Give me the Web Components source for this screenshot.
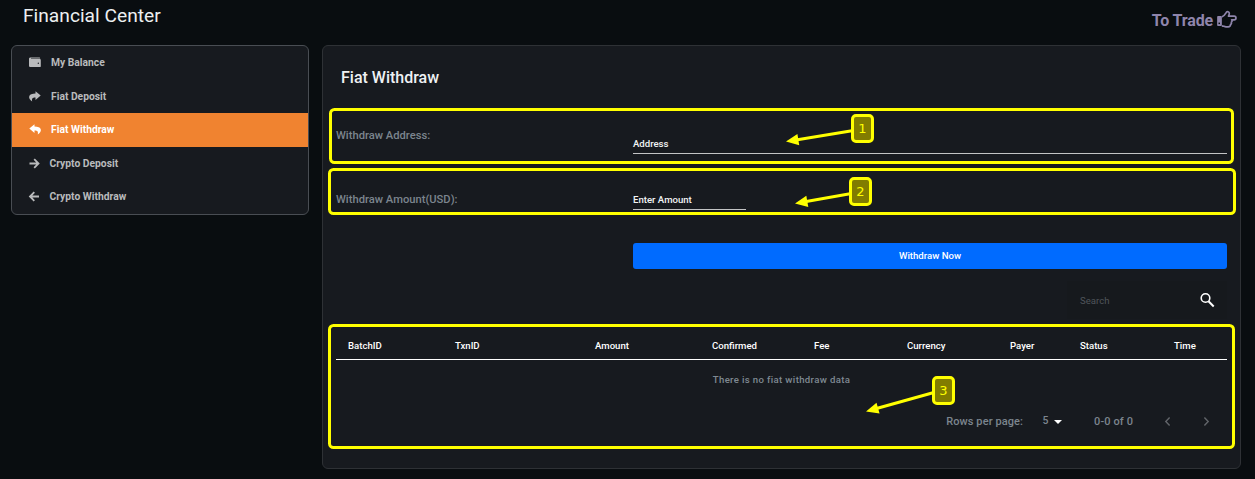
<!DOCTYPE html>
<html lang="en">
<head>
<meta charset="utf-8">
<title>Financial Center</title>
<style>
html,body{margin:0;height:100%;overflow:hidden;background:#090d10}
body{font-family:Roboto,"Liberation Sans",sans-serif}
</style>
</head>
<body>
<finance-page></finance-page>
<script>
const define = (name, html, setup) => customElements.define(name, class extends HTMLElement {
  constructor() {
    super();
    const t = document.createElement('template');
    t.innerHTML = html;
    this.attachShadow({mode: 'open'}).append(t.content.cloneNode(true));
  }
  connectedCallback() { if (setup) setup(this, this.shadowRoot); }
});

define('page-header', `
<style>
:host{display:flex;justify-content:space-between;height:45px;padding:0 18px 0 23px;box-sizing:border-box;color:#eceff1}
h1{margin:4px 0 0;font-size:19.2px;line-height:24px;font-weight:400}
a{display:flex;align-items:center;gap:4px;height:20px;margin-top:10px;color:#8f85ac;font-size:16px;font-weight:700;letter-spacing:-.15px}
svg{display:block;overflow:visible}
</style>
<h1>Financial Center</h1>
<a><span>To Trade</span>
<svg width="20" height="18" viewBox="0 0 20 18" fill="none" stroke="currentColor" stroke-width="1.7" stroke-linejoin="round"><path d="M.7 5.500h3.600v9H.7z" fill="currentColor" stroke-width="1"/><path d="M4.800 5.900c1.900-.3 3-1.900 4-3.700C9.400 1 10.200.5 11.100.8c1.300.5 1.500 1.800.9 3.100l-.5 1.200h5.600c2.500 0 2.500 3.700 0 3.700h-2.500c.7.800.6 2-.3 2.500.4 1 0 1.900-.8 2.200.1 1.500-.7 2.300-2.300 2.300H9c-1.600 0-2.500-.9-4.200-1"/><rect x="1.500" y="11.600" width="1.500" height="1.500" fill="#090d10" stroke="none"/></svg></a>`);

const MENU_ICONS = {
  wallet: '<path d="M1.500 .6h8.700c.6 0 1 .4 1 .9H2v.6h8.600c.8 0 1.200.4 1.200 1.200v5.600c0 .8-.4 1.200-1.200 1.200H1.500C.6 10.100 0 9.600 0 8.700V2C0 1.200.6 .6 1.500 .6zm7.800 5a.7.7 0 1 0 0 1.400.7.7 0 0 0 0-1.400z" fill-rule="evenodd"/>',
  share: '<path d="M6.500 .3 11.700 4.600 6.500 8.900V6.500C3.800 6.400 2.500 7.300 3.200 10.500.8 9.100-.2 7.400.2 5.600.7 3.300 3.100 2.600 6.500 2.600z"/>',
  reply: '<path d="M5.500 .3.3 4.600 5.500 8.900V6.500c2.700-.1 4 .8 3.300 4 2.400-1.400 3.400-3.100 3-4.900C11.300 3.300 8.900 2.600 5.500 2.600z"/>',
  right: '<path d="M.5 5.500h9M5.200 1.200l4.300 4.300-4.300 4.300" fill="none" stroke="currentColor" stroke-width="1.800"/>',
  left: '<path d="M10 5.500H1M5.300 1.200 1 5.500l4.300 4.300" fill="none" stroke="currentColor" stroke-width="1.800"/>'
};
define('menu-item', `
<style>
:host{display:flex;align-items:center;box-sizing:border-box;height:33.600px;padding-left:17px;color:#b9babc;font-size:10.3px;font-weight:700}
:host([active]){background:#f08330;color:#fff}
svg{display:block;width:12px;height:11px;overflow:visible;fill:currentColor;margin-right:10px}
:host([narrow]) svg{margin-right:8.500px}
:host([icon=left]){padding-bottom:1px}
</style>
<svg viewBox="0 0 12 11"></svg><slot></slot>`, (el, root) => {
  root.querySelector('svg').innerHTML = MENU_ICONS[el.getAttribute('icon')];
});

define('side-menu', `
<style>
:host{display:flex;flex-direction:column;box-sizing:border-box;width:298px;height:170px;border:1px solid #494d53;border-radius:6px;background:#171a1f;overflow:hidden}
</style><slot></slot>`);

define('form-row', `
<style>
:host{display:grid;grid-template-columns:297px 1fr;align-items:start}
.label{margin-top:1px;font-size:11.200px;line-height:16px;font-weight:500;color:#7c858e}
</style>
<div class="label"></div><slot></slot>`, (el, root) => {
  root.querySelector('.label').textContent = el.getAttribute('label') || '';
});

define('text-field', `
<style>
:host{display:block;box-sizing:border-box;height:18px;border-bottom:1px solid #c3c4c5;color:#f2f4f5;font-size:9.600px;line-height:15px;font-weight:500}
</style><slot></slot>`);

define('primary-button', `
<style>
:host{display:flex;align-items:center;justify-content:center;box-sizing:border-box;height:26px;padding-bottom:1px;border-radius:3px;background:#006bff;color:#fff;font-size:9.600px;font-weight:500}
</style><slot></slot>`);

define('search-box', `
<style>
:host{display:flex;align-items:center;justify-content:space-between;box-sizing:border-box;width:160px;height:38px;padding:0 12px 0 13px;margin-left:auto;background:#16191d;color:#50555b;font-size:9.600px}
svg{display:block}
</style>
<slot></slot>
<svg width="16" height="16" viewBox="0 0 16 16" fill="none" stroke="#fff" stroke-width="1.600"><circle cx="6.500" cy="6" r="4.300"/><path d="m9.500 9.300 5.200 5.200" stroke-width="2"/></svg>`);

define('data-table', `
<style>
:host{display:block}
.head{display:grid;grid-template-columns:107px 140px 117px 102px 93px 103px 70px 94px 1fr;box-sizing:border-box;height:28px;padding-left:12px;border-bottom:1px solid #fff;color:#fff;font-size:9.600px;line-height:27px;font-weight:500}
.empty{text-align:center;color:#7f8992;font-size:9.600px;line-height:16px;margin-top:12px;font-weight:500;letter-spacing:.35px}
</style>
<div class="head"></div><div class="empty"><slot></slot></div>`, (el, root) => {
  root.querySelector('.head').innerHTML = el.getAttribute('columns').split(',').map(c => `<span>${c}</span>`).join('');
});

define('table-pager', `
<style>
:host{display:flex;align-items:center;justify-content:flex-end;height:20px;color:#7c858e;font-size:11px;font-weight:500;letter-spacing:.1px}
svg{display:block;overflow:visible}
.size{margin-left:19.500px;width:11.500px;font-size:10.500px;line-height:20px;height:20px}
.range{margin-left:32px;margin-right:32px}
.next{margin-left:34px;margin-right:18px}
</style>
<span>Rows per page:</span><span class="size">5</span>
<svg width="8" height="4" viewBox="0 0 8 4"><path d="M0 1h8L4 5z" fill="#fff"/></svg>
<span class="range">0-0 of 0</span>
<svg width="5" height="8" viewBox="0 0 5 8" fill="none" stroke="#62656a" stroke-width="1.400"><path d="M4.600 .5 .8 4.500l3.800 4"/></svg>
<svg class="next" width="5" height="8" viewBox="0 0 5 8" fill="none" stroke="#62656a" stroke-width="1.400"><path d="M.4 .5 4.200 4.500 .4 8.500"/></svg>`);

define('withdraw-panel', `
<style>
:host{display:flex;flex-direction:column;box-sizing:border-box;width:919px;height:424px;padding:0 13px;border:1px solid #2e3135;border-radius:6px;background:#171a1f}
h2{margin:20px 0 0 5px;font-size:16px;line-height:24px;font-weight:500;color:#eef1f3}
.address{margin-top:37px}.address text-field{margin-top:9px}
.amount{margin-top:37px}.amount text-field{width:113px;margin-top:1px}
.submit{margin-top:33px}
search-box{margin-top:12px}
data-table{margin-top:13px}
table-pager{margin-top:23px}
</style>
<h2>Fiat Withdraw</h2>
<form-row class="address" label="Withdraw Address:"><text-field>Address</text-field></form-row>
<form-row class="amount" label="Withdraw Amount(USD):"><text-field>Enter Amount</text-field></form-row>
<form-row class="submit"><primary-button>Withdraw Now</primary-button></form-row>
<search-box>Search</search-box>
<data-table columns="BatchID,TxnID,Amount,Confirmed,Fee,Currency,Payer,Status,Time">There is no fiat withdraw data</data-table>
<table-pager></table-pager>`);

/* Highlight frames and numbered callouts lying over the page */
define('callout-layer', `
<style>
:host{position:absolute;inset:0;pointer-events:none}
svg{display:block}
text{font:13px "DejaVu Sans",sans-serif;fill:#ff0;text-anchor:middle}
</style>
<svg width="1255" height="479" fill="none" stroke="#ff0" stroke-width="3">
<rect x="330.500" y="109.500" width="902" height="53" rx="4"/>
<rect x="329.500" y="169.500" width="905" height="44" rx="4"/>
<rect x="329.500" y="325.500" width="904" height="122" rx="4"/>
<g id="marks"></g>
</svg>`, (el, root) => {
  const marks = [[851, 114, 786, 141.5, 1], [849, 177, 795, 203.5, 2], [932, 376, 866, 411.5, 3]];
  root.querySelector('#marks').innerHTML = marks.map(([x, y, tx, ty, n]) => {
    const sy = y + 17, a = Math.atan2(sy - ty, x - tx) * 180 / Math.PI, len = Math.hypot(sy - ty, x - tx);
    return `<g transform="translate(${tx} ${ty}) rotate(${a})"><path d="M10 0H${len + 1}"/><path d="M0 0 12.500-5.700V5.700z" fill="#ff0" stroke="none"/></g>
      <rect x="${x + 1.5}" y="${y + 1.5}" width="20" height="26" rx="3.500" fill="#817c00"/>
      <text x="${x + 11.5}" y="${y + 19}" stroke="none">${n}</text>`;
  }).join('');
});

define('finance-page', `
<style>
:host{display:block;position:relative;width:1255px;height:479px;overflow:hidden;background:#090d10}
main{display:flex;align-items:flex-start;gap:13px;padding-left:11px}
</style>
<page-header></page-header>
<main>
<side-menu>
<menu-item icon="wallet">My Balance</menu-item>
<menu-item icon="share">Fiat Deposit</menu-item>
<menu-item icon="reply" active>Fiat Withdraw</menu-item>
<menu-item icon="right" narrow>Crypto Deposit</menu-item>
<menu-item icon="left" narrow>Crypto Withdraw</menu-item>
</side-menu>
<withdraw-panel></withdraw-panel>
</main>
<callout-layer></callout-layer>`);
</script>
</body>
</html>
